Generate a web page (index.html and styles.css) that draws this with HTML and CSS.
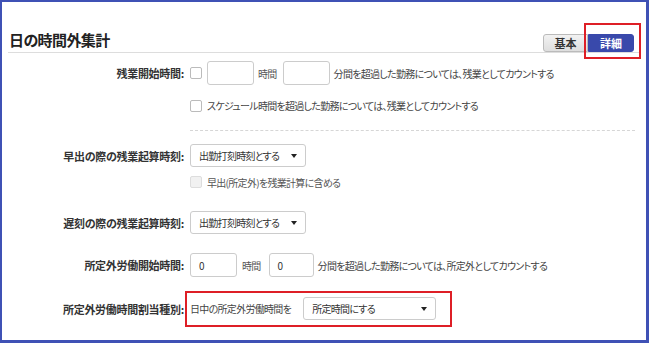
FILE: index.html
```html
<!DOCTYPE html>
<html lang="ja">
<head>
  <meta charset="UTF-8" />
  <title>日の時間外集計</title>
  <link rel="stylesheet" href="styles.css">
</head>
<body>
  <div class="frame">
    <div class="header">
      <h1>日の時間外集計</h1>
      <div class="tabs">
        <span class="tab">基本</span>
        <span class="tab-wrap">
          <span class="tab active">詳細</span>
          <span class="mark mark-tab"></span>
        </span>
      </div>
    </div>

    <!-- 残業開始時間 -->
    <div class="row row-start">
      <div class="label">残業開始時間:</div>
      <div class="field">
        <span class="check"></span>
        <span class="input"></span>
        <span class="unit">時間</span>
        <span class="input"></span>
        <span class="text">分間を超過した勤務については、残業としてカウントする</span>
      </div>
    </div>
    <div class="row row-sched">
      <div class="label"></div>
      <div class="field">
        <span class="check"></span>
        <span class="text">スケジュール時間を超過した勤務については、残業としてカウントする</span>
      </div>
    </div>

    <div class="sep"></div>

    <!-- 早出 -->
    <div class="row row-early">
      <div class="label">早出の際の残業起算時刻:</div>
      <div class="field">
        <span class="select"><span>出勤打刻時刻とする</span><span class="caret"></span></span>
      </div>
    </div>
    <div class="row row-early-check">
      <div class="label"></div>
      <div class="field">
        <span class="check disabled"></span>
        <span class="text muted">早出(所定外)を残業計算に含める</span>
      </div>
    </div>

    <!-- 遅刻 -->
    <div class="row row-late">
      <div class="label">遅刻の際の残業起算時刻:</div>
      <div class="field">
        <span class="select"><span>出勤打刻時刻とする</span><span class="caret"></span></span>
      </div>
    </div>

    <!-- 所定外 -->
    <div class="row row-extra">
      <div class="label">所定外労働開始時間:</div>
      <div class="field">
        <span class="input">0</span>
        <span class="unit">時間</span>
        <span class="input narrow">0</span>
        <span class="text">分間を超過した勤務については、所定外としてカウントする</span>
      </div>
    </div>

    <div class="row row-kind">
      <div class="label">所定外労働時間割当種別:</div>
      <div class="field">
        <span class="text">日中の所定外労働時間を</span>
        <span class="select wide"><span>所定時間にする</span><span class="caret"></span></span>
        <span class="mark mark-kind"></span>
      </div>
    </div>
  </div>
</body>
</html>
```

FILE: styles.css
```css
:root {
  --frame: #3f51b5;
  --blue: #3949ab;
  --red: #de1f26;
  --text: #444;
  --label: #333;
  --border: #ccc;
}

* {
  box-sizing: border-box;
}

body {
  margin: 0;
  background: #fff;
  color: var(--text);
  font-family: "Noto Sans CJK JP", "Noto Sans", sans-serif;
  font-feature-settings: "palt";
  font-size: 10px;
}

.frame {
  width: 649px;
  height: 343px;
  border: solid var(--frame);
  border-width: 2px 3px 3px 2px;
  padding: 0 6px;
}

.header {
  height: 51px;
  display: flex;
  align-items: flex-end;
  justify-content: space-between;
  border-bottom: 1px solid #ddd;
}

h1 {
  margin: 0 0 0 1px;
  padding-bottom: 2px;
  font-size: 15px;
  line-height: 20px;
  font-weight: 700;
  letter-spacing: -0.6px;
  color: #222;
}

.tabs {
  display: flex;
  margin-right: 6px;
}

.tab-wrap {
  position: relative;
  display: flex;
}

.tab {
  width: 45px;
  height: 18px;
  display: flex;
  align-items: center;
  justify-content: center;
  font-size: 11px;
  font-weight: 700;
  color: #333;
  background: linear-gradient(#f2f2f2, #dedede);
  border: 1px solid #bbb;
  border-radius: 3px 0 0 3px;
}

.tab.active {
  width: 46px;
  color: #fff;
  background: var(--blue);
  border-color: var(--blue);
  border-radius: 0 3px 3px 0;
}

/* 赤枠の注釈 */
.mark {
  position: absolute;
  border: 2px solid var(--red);
}

.mark-tab {
  left: -4px;
  top: -11px;
  width: 57px;
  height: 36px;
}

.row {
  display: grid;
  grid-template-columns: 176px 1fr;
  column-gap: 6px;
  align-items: center;
}

.label {
  text-align: right;
  font-size: 11px;
  font-weight: 700;
  letter-spacing: -0.3px;
  color: var(--label);
  white-space: nowrap;
}

.field {
  display: flex;
  align-items: center;
  gap: 4px;
  position: relative;
  letter-spacing: -0.7px;
}

.row-start { margin-top: 8px; height: 24px; }
.row-sched { margin-top: 10px; height: 21px; }
.row-early { margin-top: 13px; height: 23px; }
.row-early-check { margin-top: 5px; height: 20px; }
.row-late { margin-top: 19px; height: 23px; }
.row-extra { margin-top: 19px; height: 24px; }
.row-kind { margin-top: 20px; height: 23px; }

.sep {
  margin: 14px 5px 0 182px;
  border-top: 1px dashed #d6d6d6;
}

.check {
  width: 12px;
  height: 12px;
  border: 1px solid #bbb;
  border-radius: 2px;
  background: #fff;
  margin-right: 1px;
}

.check.disabled {
  background: #f1f1f1;
  border-color: #ddd;
}

.input {
  width: 47px;
  height: 24px;
  border: 1px solid var(--border);
  border-radius: 3px;
  background: #fff;
  padding-left: 8px;
  display: flex;
  align-items: center;
  color: #333;
}

.input.narrow {
  width: 45px;
}

.unit {
  color: #555;
}

.row-start .unit {
  margin-right: 2px;
}

.row-extra .unit {
  margin: 0 4px 0 1px;
}

.text {
  color: var(--text);
  white-space: nowrap;
}

.muted {
  color: #555;
}

.select {
  width: 116px;
  height: 23px;
  border: 1px solid var(--border);
  border-radius: 3px;
  background: #fff;
  display: flex;
  align-items: center;
  justify-content: space-between;
  padding: 0 8px;
  color: #333;
}

.select.wide {
  width: 133px;
  margin-left: 8px;
}

.caret {
  width: 0;
  height: 0;
  border-left: 3px solid transparent;
  border-right: 3px solid transparent;
  border-top: 4px solid #222;
}

.mark-kind {
  left: -5px;
  top: -6px;
  width: 267px;
  height: 36px;
}
```
